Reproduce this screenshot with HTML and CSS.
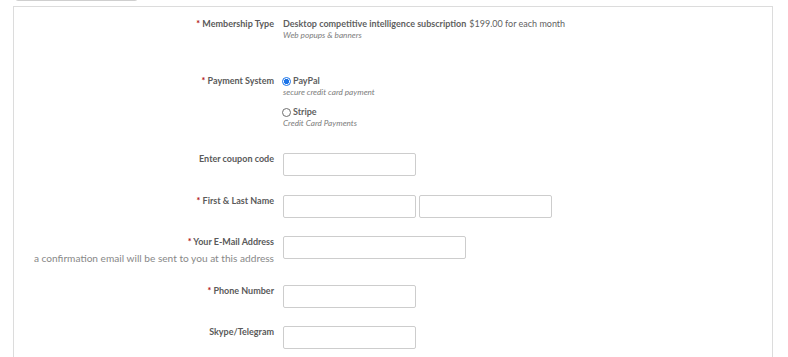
FILE: index.html
```html
<!DOCTYPE html>
<html lang="en">
<head>
<meta charset="utf-8">
<title>Membership checkout</title>
<link rel="stylesheet" href="styles.css">
</head>
<body>
<div class="top-tab"></div>
<form class="panel">
  <div class="row row-membership">
    <div class="label"><span class="req">*</span> Membership Type</div>
    <div class="field">
      <div class="line"><strong>Desktop competitive intelligence subscription</strong> $199.00 for each month</div>
      <div class="note">Web popups &amp; banners</div>
    </div>
  </div>

  <div class="row row-payment">
    <div class="label"><span class="req">*</span> Payment System</div>
    <div class="field">
      <label class="option">
        <span class="line"><input type="radio" name="pay" class="radio" checked> <strong>PayPal</strong></span>
        <span class="note">secure credit card payment</span>
      </label>
      <label class="option">
        <span class="line"><input type="radio" name="pay" class="radio"> <strong>Stripe</strong></span>
        <span class="note">Credit Card Payments</span>
      </label>
    </div>
  </div>

  <div class="row row-coupon">
    <div class="label">Enter coupon code</div>
    <div class="field"><input type="text" class="input"></div>
  </div>

  <div class="row row-name">
    <div class="label"><span class="req">*</span> First &amp; Last Name</div>
    <div class="field inputs"><input type="text" class="input"><input type="text" class="input"></div>
  </div>

  <div class="row row-email">
    <div class="label"><span class="req">*</span> Your E-Mail Address
      <div class="helper">a confirmation email will be sent to you at this address</div>
    </div>
    <div class="field"><input type="text" class="input input-wide"></div>
  </div>

  <div class="row row-phone">
    <div class="label"><span class="req">*</span> Phone Number</div>
    <div class="field"><input type="text" class="input"></div>
  </div>

  <div class="row row-skype">
    <div class="label">Skype/Telegram</div>
    <div class="field"><input type="text" class="input"></div>
  </div>
</form>
</body>
</html>
```

FILE: styles.css
```css
html, body {
  margin: 0;
  padding: 0;
  background: #fff;
  overflow: hidden;
}
body {
  font-family: Lato, "Liberation Sans", sans-serif;
  color: #5f5f5f;
  font-size: 9px;
}
.top-tab {
  margin: -20px 0 0 15px;
  width: 123px;
  height: 21px;
  box-sizing: border-box;
  border: 1px solid #cfcfcf;
  border-radius: 3px;
}
.panel {
  margin: 5px 0 0 13px;
  width: 760px;
  height: 400px;
  box-sizing: border-box;
  border: 1px solid #dcdcdc;
  padding-top: 11px;
}
.row {
  display: grid;
  grid-template-columns: 260px 1fr;
  column-gap: 9px;
  align-items: start;
}
.label {
  text-align: right;
  font-weight: 700;
  line-height: 12px;
  color: #5a5a5a;
}
.req {
  color: #b01010;
}
.field {
  display: flex;
  flex-direction: column;
}
.line {
  display: flex;
  align-items: center;
  line-height: 12px;
  white-space: nowrap;
}
.line strong {
  font-weight: 700;
  margin-right: 3px;
}
.option {
  display: flex;
  flex-direction: column;
  margin-bottom: 8px;
}
.note {
  font-style: italic;
  font-size: 8.2px;
  line-height: 11px;
  color: #7c7c7c;
}
.radio {
  appearance: none;
  -webkit-appearance: none;
  margin: 0 2px 0 -1px;
  width: 9px;
  height: 9px;
  box-sizing: border-box;
  border: 1px solid #6f6f6f;
  border-radius: 50%;
  background: #fff;
}
.radio:checked {
  border-color: #1a73e8;
  background: radial-gradient(circle, #1a73e8 0 2.4px, #fff 2.9px);
}
.input {
  width: 133px;
  height: 23px;
  box-sizing: border-box;
  border: 1px solid #cdcdcd;
  border-radius: 2px;
  margin: 0;
  padding: 0 4px;
  background: #fff;
}
.input-wide {
  width: 183px;
}
.inputs {
  flex-direction: row;
  gap: 3px;
}
.helper {
  font-weight: 400;
  font-size: 10.15px;
  line-height: 16px;
  color: #888;
  margin-top: 2px;
}
.row-membership { margin-bottom: 34px; }
.row-payment { margin-bottom: 16px; }
.row-coupon { margin-bottom: 19px; }
.row-name { margin-bottom: 18px; }
.row-email { margin-bottom: 19px; }
.row-phone { margin-bottom: 18px; }
```
